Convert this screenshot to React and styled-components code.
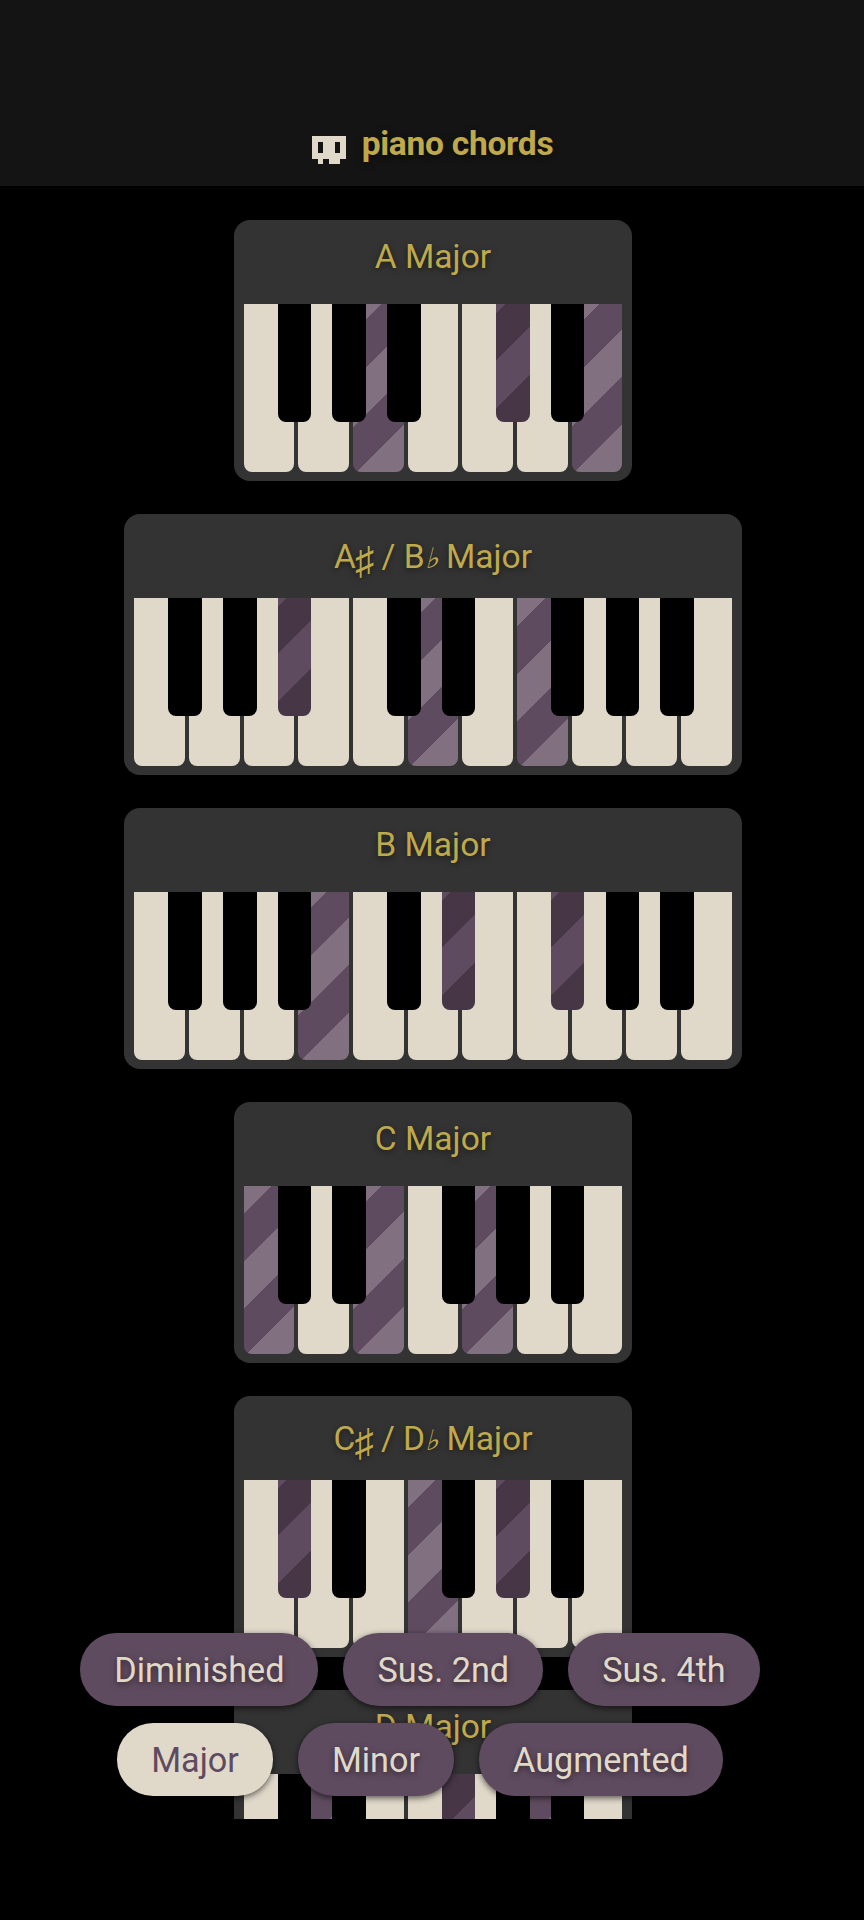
import React from 'react';
import styled, { createGlobalStyle } from 'styled-components';

const cream = '#e0d9ca';
const plum = '#5f4b5f';
const gold = '#bfa94a';

const Global = createGlobalStyle`
  html, body { margin: 0; padding: 0; background: #000; }
  body { font-family: Roboto, sans-serif; }
`;

const Page = styled.div`
  position: relative;
  width: 864px;
  height: 1920px;
  background: #000;
  overflow: hidden;
`;

const Header = styled.header`
  height: 186px;
  box-sizing: border-box;
  background: #141414;
  display: flex;
  justify-content: center;
  align-items: flex-end;
  gap: 16px;
  padding: 0 0 23px 1px;
`;

const Logo = styled.svg`
  width: 34px;
  height: 28.5px;
  margin-bottom: -1px;
  fill: ${cream};
  display: block;
`;

const AppTitle = styled.h1`
  margin: 0;
  font-size: 33.6px;
  font-weight: 700;
  line-height: 38px;
  letter-spacing: -0.3px;
  color: ${gold};
  text-shadow: 0 2px 6px rgba(0, 0, 0, 0.5);
`;

const Scroller = styled.main`
  height: 1633px;
  box-sizing: border-box;
  padding: 34px 0 0 2px;
  overflow: hidden;
  display: flex;
  flex-direction: column;
  align-items: center;
  gap: 33.3px;
`;

const Card = styled.section`
  flex: none;
  background: #333;
  border-radius: 16px;
  padding: 0 10px 8.7px;
`;

const ChordName = styled.h2`
  margin: 0;
  height: 84px;
  box-sizing: border-box;
  padding-top: ${(p) => (p.$accidental ? '22.9px' : '16.6px')};
  font-size: 33.6px;
  font-weight: 400;
  color: ${gold};
  text-align: center;
  white-space: pre;
  text-shadow: 0 2px 6px rgba(0, 0, 0, 0.5);
`;

const Sharp = styled.i`
  font-size: 1.15em;
  line-height: 0;
  vertical-align: -0.16em;
  margin: 0 -1px;
`;

const Flat = styled.i`
  font-size: 0.85em;
  line-height: 0;
`;

const Keys = styled.div`
  display: flex;
  gap: 4px;
`;

const WhiteKey = styled.div`
  position: relative;
  width: 50.65px;
  height: 168px;
  border-radius: 0 0 8px 8px;
  background: ${(p) =>
    p.$on
      ? `repeating-linear-gradient(-45deg, #807080 0 33.6px, ${plum} 33.6px 67.2px)`
      : cream};
`;

const BlackKey = styled.div`
  position: absolute;
  z-index: 1;
  top: 0;
  left: 34px;
  width: 33.5px;
  height: 117.6px;
  border-radius: 0 0 8px 8px;
  background: ${(p) =>
    p.$on
      ? `repeating-linear-gradient(-45deg, #463646 0 33.6px, ${plum} 33.6px 67.2px)`
      : '#000'};
`;

const Controls = styled.nav`
  position: absolute;
  z-index: 2;
  left: 0;
  right: 24px;
  top: 1633px;
  display: flex;
  flex-direction: column;
  gap: 17px;
`;

const ControlRow = styled.div`
  display: flex;
  justify-content: center;
  gap: 25px;
`;

const ChipButton = styled.button`
  height: 73px;
  padding: 0 34px;
  border: 0;
  border-radius: 36px;
  font-family: Roboto, sans-serif;
  font-size: 34.2px;
  font-weight: 400;
  background: ${(p) => (p.$active ? cream : plum)};
  color: ${(p) => (p.$active ? plum : cream)};
  text-shadow: ${(p) => (p.$active ? 'none' : '0 2px 6px rgba(0, 0, 0, 0.5)')};
  box-shadow: 0 2px 6px rgba(0, 0, 0, 0.6);
`;

const F_SCALE = ['F', 'G', 'A', 'B', 'C', 'D', 'E', 'F2', 'G2', 'A2', 'B2'];
const C_SCALE = ['C', 'D', 'E', 'F', 'G', 'A', 'B'];
const NO_SHARP = ['B', 'E', 'B2', 'E2'];

const chords = [
  { name: 'A Major', notes: F_SCALE.slice(0, 7), on: ['A', 'C#', 'E'] },
  { name: 'A♯ / B♭ Major', notes: F_SCALE, on: ['A#', 'D', 'F2'] },
  { name: 'B Major', notes: F_SCALE, on: ['B', 'D#', 'F2#'] },
  { name: 'C Major', notes: C_SCALE, on: ['C', 'E', 'G'] },
  { name: 'C♯ / D♭ Major', notes: C_SCALE, on: ['C#', 'F', 'G#'] },
  { name: 'D Major', notes: C_SCALE, on: ['D', 'F#', 'A'] },
];

const rows = [
  ['Diminished', 'Sus. 2nd', 'Sus. 4th'],
  ['Major', 'Minor', 'Augmented'],
];

function Skull() {
  return (
    <Logo viewBox="0 0 6 5" shapeRendering="crispEdges" aria-hidden="true">
      <path fillRule="evenodd" d="M0 0h6v4H5v1H3V4H2v1H1V4H0zM1 1v2h1V1zM4 1v2h1V1z" />
    </Logo>
  );
}

function Name({ text }) {
  const parts = text.split(/([♯♭])/);
  return (
    <ChordName $accidental={parts.length > 1}>
      {parts.map((part, i) => {
        if (part === '♯') return <Sharp key={i}>♯</Sharp>;
        if (part === '♭') return <Flat key={i}>♭</Flat>;
        return part;
      })}
    </ChordName>
  );
}

function Chord({ name, notes, on }) {
  return (
    <Card>
      <Name text={name} />
      <Keys>
        {notes.map((n, i) => (
          <WhiteKey key={n} $on={on.includes(n)}>
            {!NO_SHARP.includes(n) && i < notes.length - 1 && (
              <BlackKey $on={on.includes(`${n}#`)} />
            )}
          </WhiteKey>
        ))}
      </Keys>
    </Card>
  );
}

export default function App() {
  return (
    <Page>
      <Global />
      <Header>
        <Skull />
        <AppTitle>piano chords</AppTitle>
      </Header>
      <Scroller>
        {chords.map((c) => (
          <Chord key={c.name} {...c} />
        ))}
      </Scroller>
      <Controls>
        {rows.map((row) => (
          <ControlRow key={row[0]}>
            {row.map((label) => (
              <ChipButton key={label} $active={label === 'Major'}>
                {label}
              </ChipButton>
            ))}
          </ControlRow>
        ))}
      </Controls>
    </Page>
  );
}
